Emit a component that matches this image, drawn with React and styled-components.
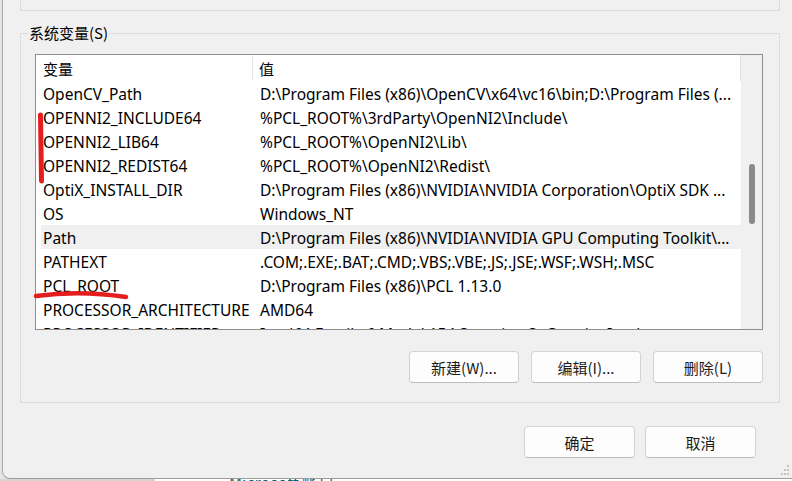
import React from 'react';
import styled, { createGlobalStyle } from 'styled-components';

const rows = [
  ['OpenCV_Path', 'D:\\Program Files (x86)\\OpenCV\\x64\\vc16\\bin;D:\\Program Files (...'],
  ['OPENNI2_INCLUDE64', '%PCL_ROOT%\\3rdParty\\OpenNI2\\Include\\'],
  ['OPENNI2_LIB64', '%PCL_ROOT%\\OpenNI2\\Lib\\'],
  ['OPENNI2_REDIST64', '%PCL_ROOT%\\OpenNI2\\Redist\\'],
  ['OptiX_INSTALL_DIR', 'D:\\Program Files (x86)\\NVIDIA\\NVIDIA Corporation\\OptiX SDK ...'],
  ['OS', 'Windows_NT'],
  ['Path', 'D:\\Program Files (x86)\\NVIDIA\\NVIDIA GPU Computing Toolkit\\...', true],
  ['PATHEXT', '.COM;.EXE;.BAT;.CMD;.VBS;.VBE;.JS;.JSE;.WSF;.WSH;.MSC'],
  ['PCL_ROOT', 'D:\\Program Files (x86)\\PCL 1.13.0'],
  ['PROCESSOR_ARCHITECTURE', 'AMD64'],
  ['PROCESSOR_IDENTIFIER', 'Intel64 Family 6 Model 154 Stepping 3, GenuineIntel'],
];

const GlobalStyle = createGlobalStyle`
  html, body {
    margin: 0;
    padding: 0;
  }
  body {
    width: 792px;
    height: 481px;
    overflow: hidden;
    background: #e4e4e4;
    font-family: "Noto Sans", "Noto Sans CJK SC", sans-serif;
    color: #000;
  }
`;

export default function App() {
  return (
    <>
      <GlobalStyle />
      <Page>
        <Window>
          <TopGroupStub />
          <GroupBox>
            <Legend>系统变量(S)</Legend>
            <ListBox>
              <Table>
                <HeaderRow>
                  <HeaderCell $sep>变量</HeaderCell>
                  <HeaderCell>值</HeaderCell>
                </HeaderRow>
                {rows.map(([name, value, selected]) => (
                  <Row key={name} $selected={selected}>
                    <NameCell>{name}</NameCell>
                    <ValueCell>{value}</ValueCell>
                  </Row>
                ))}
              </Table>
              <ScrollBar>
                <Thumb />
              </ScrollBar>
            </ListBox>
            <ButtonRow>
              <Button>新建(W)...</Button>
              <Button>编辑(I)...</Button>
              <Button>删除(L)</Button>
            </ButtonRow>
          </GroupBox>
          <Footer>
            <Button $wide>确定</Button>
            <Button $wide>取消</Button>
          </Footer>
          <Grip>
            <svg width="12" height="12" viewBox="0 0 12 12">
              <rect x="9" y="1" width="2" height="2" fill="#c4c4c4" />
              <rect x="6" y="5" width="2" height="2" fill="#c4c4c4" />
              <rect x="9" y="5" width="2" height="2" fill="#c4c4c4" />
              <rect x="3" y="9" width="2" height="2" fill="#c4c4c4" />
              <rect x="6" y="9" width="2" height="2" fill="#c4c4c4" />
              <rect x="9" y="9" width="2" height="2" fill="#c4c4c4" />
            </svg>
          </Grip>
        </Window>
        <BelowStrip>
          <BelowGrey />
          <BelowWhite>Microsoft 帐户</BelowWhite>
        </BelowStrip>
        <Marks width="792" height="481" viewBox="0 0 792 481">
          <path d="M40.5 115 L41.5 181" stroke="#e41e1e" strokeWidth="5" strokeLinecap="round" fill="none" />
          <path d="M36 296 Q 80 290 126 297" stroke="#e41e1e" strokeWidth="4.5" strokeLinecap="round" fill="none" />
        </Marks>
      </Page>
    </>
  );
}

const Page = styled.div`
  position: relative;
  display: flex;
  flex-direction: column;
  width: 792px;
  height: 481px;
  overflow: hidden;
`;

const Window = styled.div`
  position: relative;
  box-sizing: border-box;
  height: 479px;
  margin-left: 2px;
  padding: 0 12px 0 17px;
  background: #f0f0f0;
  border-left: 1px solid #a8a8a8;
  border-bottom: 1px solid #9c9c9c;
  border-bottom-left-radius: 8px;
  display: flex;
  flex-direction: column;
`;

const TopGroupStub = styled.div`
  height: 11px;
  box-sizing: border-box;
  border: 1px solid #dcdcdc;
  border-top: none;
`;

const GroupBox = styled.fieldset`
  margin: 12px 0 0 0;
  padding: 0 16px 19px 14px;
  border: 1px solid #dcdcdc;
  min-width: 0;
`;

const Legend = styled.legend`
  margin-left: -7px;
  padding: 0 1px;
  font-size: 15px;
  line-height: 20px;
  font-family: "Noto Sans CJK SC", sans-serif;
`;

const ListBox = styled.div`
  margin-top: 11px;
  height: 276px;
  box-sizing: border-box;
  border: 1px solid #8e8e8e;
  background: #fff;
  display: flex;
  overflow: hidden;
`;

const Table = styled.div`
  flex: 1;
  min-width: 0;
  display: flex;
  flex-direction: column;
`;

const HeaderRow = styled.div`
  display: grid;
  grid-template-columns: 217px 1fr;
  height: 26px;
  flex-shrink: 0;
  border-right: 1px solid #e2e2e2;
`;

const HeaderCell = styled.div`
  display: flex;
  align-items: center;
  padding-left: ${p => (p.$sep ? '7px' : '6px')};
  font-size: 15px;
  font-family: "Noto Sans CJK SC", sans-serif;
  border-right: ${p => (p.$sep ? '1px solid #e5e5e5' : 'none')};
  margin: 1px 0;
`;

const Row = styled.div`
  display: grid;
  grid-template-columns: 212px 1fr;
  height: 24px;
  flex-shrink: 0;
  margin-left: 5px;
  background: ${p => (p.$selected ? '#f0f0f0' : 'transparent')};
  font-size: 15.5px;
  line-height: 24px;
  white-space: nowrap;
`;

const NameCell = styled.div`
  padding: 1px 0 0 2px;
  overflow: hidden;
`;

const ValueCell = styled.div`
  padding: 1px 0 0 7px;
  overflow: hidden;
`;

const ScrollBar = styled.div`
  width: 21px;
  flex-shrink: 0;
  background: #f0f0f0;
  display: flex;
  justify-content: center;
`;

const Thumb = styled.div`
  margin-top: 109px;
  width: 6px;
  height: 60px;
  border-radius: 3px;
  background: #8a8a8a;
`;

const ButtonRow = styled.div`
  display: flex;
  justify-content: flex-end;
  gap: 12px;
  margin-top: 21px;
`;

const Button = styled.button`
  box-sizing: border-box;
  width: ${p => (p.$wide ? '111px' : '110px')};
  height: 32px;
  padding: 0;
  background: #fdfdfd;
  border: 1px solid #d3d3d3;
  border-bottom-color: #bdbdbd;
  border-radius: 4px;
  font-family: "Noto Sans CJK SC", sans-serif;
  font-size: 15px;
  color: #1b1b1b;
`;

const Footer = styled.div`
  display: flex;
  justify-content: flex-end;
  gap: 10px;
  margin-top: 23px;
  padding-right: 24px;
`;

const Grip = styled.div`
  position: absolute;
  right: 2px;
  bottom: 2px;
  line-height: 0;
`;

const BelowStrip = styled.div`
  display: flex;
  height: 2px;
  overflow: hidden;
`;

const BelowGrey = styled.div`
  width: 153px;
  background: #d6d6d6;
  border-right: 1px solid #b8b8b8;
`;

const BelowWhite = styled.div`
  flex: 1;
  background: #fff;
  color: #0f5e6e;
  font-family: "Noto Sans CJK SC", sans-serif;
  font-size: 16px;
  line-height: 6px;
  padding-left: 75px;
  white-space: nowrap;
`;

const Marks = styled.svg`
  position: absolute;
  left: 0;
  top: 0;
  pointer-events: none;
`;
